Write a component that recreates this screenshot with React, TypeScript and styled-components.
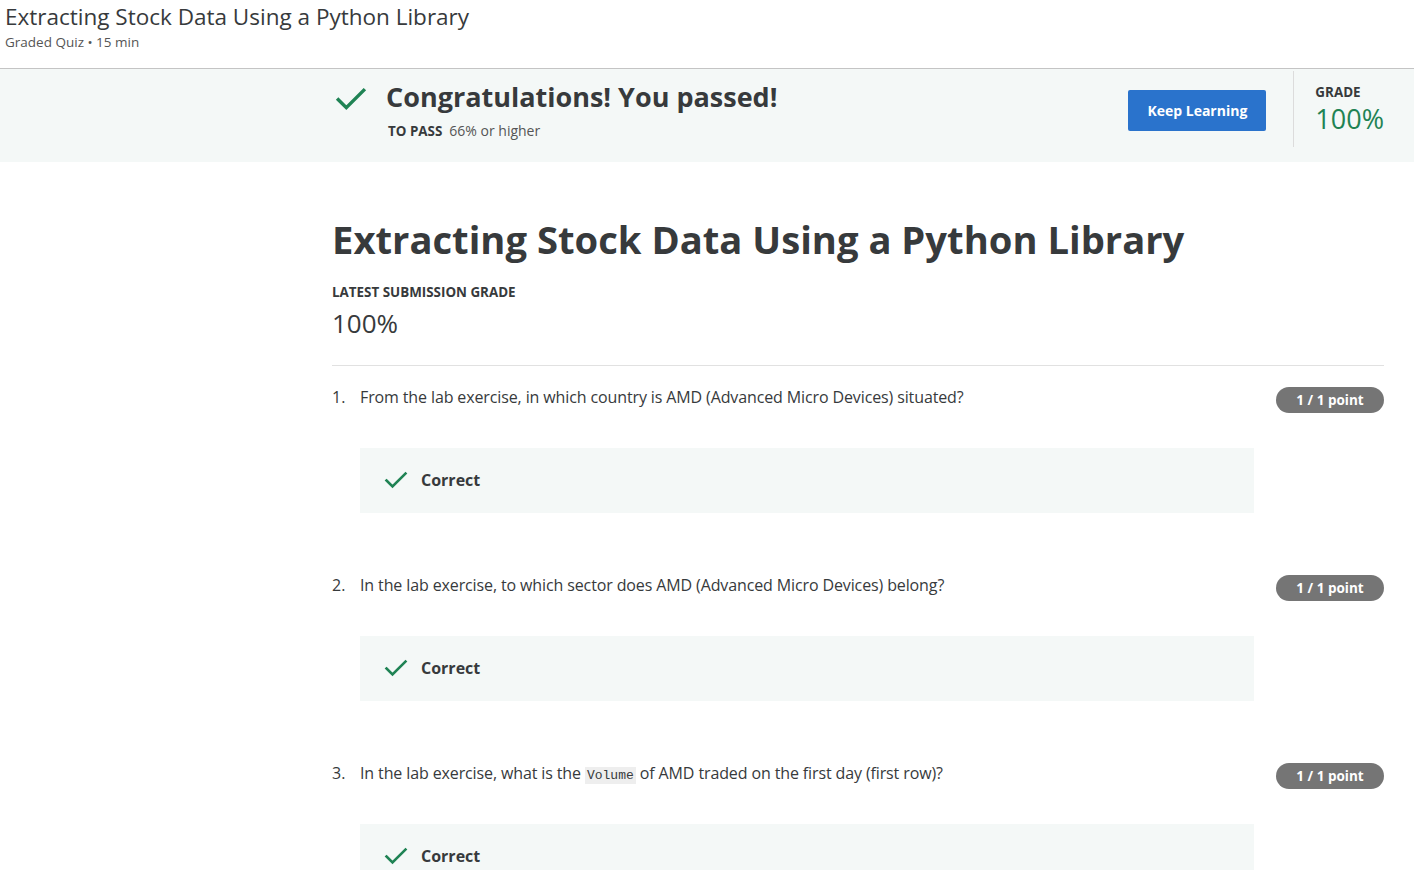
import React from "react";
import styled, { createGlobalStyle } from "styled-components";

const Global = createGlobalStyle`
  html, body { margin: 0; padding: 0; background: #fff; }
  body { font-family: "Open Sans", "Liberation Sans", sans-serif; color: #373a3c; }
  * { box-sizing: border-box; }
`;

const Page = styled.div`
  width: 1414px;
  height: 870px;
  overflow: hidden;
`;

const TopBar = styled.header`
  height: 69px;
  border-bottom: 1px solid #c4c4c4;
  padding: 2px 0 0 5px;
`;

const TopTitle = styled.h2`
  margin: 0;
  font-size: 22.5px;
  font-weight: 400;
  line-height: 29px;
  color: #373a3c;
`;

const TopMeta = styled.div`
  font-size: 13.5px;
  line-height: 20px;
  margin-top: 1px;
  color: #555;
`;

const Banner = styled.section`
  height: 93px;
  background: #f4f8f7;
  display: flex;
  align-items: flex-start;
  padding-left: 335px;
  padding-right: 30px;
`;

const BannerMain = styled.div`
  flex: 1;
  display: flex;
  gap: 19px;
  padding-top: 12px;
`;

const CheckSlot = styled.div`
  padding-top: 2px;
`;

const BannerText = styled.div`
  display: flex;
  flex-direction: column;
`;

const BannerHeading = styled.h1`
  margin: 0;
  font-size: 27px;
  font-weight: 700;
  line-height: 32px;
  color: #373a3c;
`;

const PassLine = styled.div`
  margin-top: 8px;
  padding-left: 2px;
  font-size: 14px;
  line-height: 20px;
  color: #555;
  display: flex;
  align-items: baseline;
  gap: 7px;
`;

const Label = styled.span`
  display: block;
  font-size: 13.4px;
  line-height: 18px;
  font-weight: 700;
  color: #373a3c;
  text-transform: uppercase;
`;

const PrimaryButton = styled.button`
  margin-top: 21px;
  height: 41px;
  width: 138px;
  border: none;
  border-radius: 2px;
  background: #2a73cc;
  color: #fff;
  font-family: inherit;
  font-size: 14px;
  font-weight: 700;
  cursor: pointer;
`;

const GradeBox = styled.div`
  margin-left: 27px;
  margin-top: 2px;
  height: 76px;
  border-left: 1px solid #dcdcdc;
  padding: 12px 0 0 21px;
  display: flex;
  flex-direction: column;
  gap: 1px;
`;

const GradeValue = styled.div<{ $color?: string; $size?: number }>`
  font-size: ${(p) => p.$size ?? 27}px;
  line-height: 1.25;
  color: ${(p) => p.$color ?? "#373a3c"};
  font-weight: 400;
`;

const Content = styled.main`
  width: 1052px;
  margin-left: 332px;
  padding-top: 51px;
`;

const PageTitle = styled.h1`
  margin: 0;
  font-size: 38.2px;
  font-weight: 700;
  line-height: 52px;
  color: #373a3c;
`;

const Summary = styled.div`
  margin-top: 18px;
  padding-bottom: 25px;
  border-bottom: 1px solid #e1e1e1;
  display: flex;
  flex-direction: column;
  gap: 6px;
`;

const Question = styled.div`
  padding-top: 19px;
  padding-bottom: 41px;
`;

const QuestionRow = styled.div`
  display: flex;
  align-items: flex-start;
`;

const QNum = styled.span`
  width: 28px;
  font-size: 16px;
  line-height: 24px;
  color: #373a3c;
`;

const QText = styled.div`
  flex: 1;
  font-size: 16px;
  letter-spacing: -0.12px;
  line-height: 24px;
  color: #373a3c;
`;

const Code = styled.code`
  font-family: "Liberation Mono", monospace;
  font-size: 13px;
  letter-spacing: 0;
  background: #eeeeee;
  padding: 1px 2px;
`;

const PointBadge = styled.span`
  margin-top: 2px;
  height: 26px;
  width: 108px;
  border-radius: 13px;
  background: #757575;
  color: #fff;
  font-size: 13.5px;
  font-weight: 700;
  display: flex;
  align-items: center;
  justify-content: center;
`;

const Feedback = styled.div`
  margin: 35px 130px 0 28px;
  height: 65px;
  background: #f4f8f7;
  display: flex;
  align-items: center;
  gap: 13px;
  padding-left: 24px;
`;

const FeedbackText = styled.span`
  font-size: 16px;
  font-weight: 700;
  color: #373a3c;
`;

const Check = ({ size }: { size: number }) => (
  <svg width={size} height={size} viewBox="0 0 24 24" fill="none">
    <path d="M2.5 12.5 L8.5 18.5 L21.5 5.5" stroke="#1f8354" strokeWidth="2.6" strokeLinecap="square" />
  </svg>
);

const questions: { text: React.ReactNode }[] = [
  { text: "From the lab exercise, in which country is AMD (Advanced Micro Devices) situated?" },
  { text: "In the lab exercise, to which sector does AMD (Advanced Micro Devices) belong?" },
  {
    text: (
      <>
        In the lab exercise, what is the <Code>Volume</Code> of AMD traded on the first day (first row)?
      </>
    ),
  },
];

export default function App() {
  return (
    <Page>
      <Global />
      <TopBar>
        <TopTitle>Extracting Stock Data Using a Python Library</TopTitle>
        <TopMeta>Graded Quiz • 15 min</TopMeta>
      </TopBar>
      <Banner>
        <BannerMain>
          <CheckSlot>
            <Check size={32} />
          </CheckSlot>
          <BannerText>
            <BannerHeading>Congratulations! You passed!</BannerHeading>
            <PassLine>
              <Label>To pass</Label>
              <span>66% or higher</span>
            </PassLine>
          </BannerText>
        </BannerMain>
        <PrimaryButton>Keep Learning</PrimaryButton>
        <GradeBox>
          <Label>Grade</Label>
          <GradeValue $color="#1f8354">100%</GradeValue>
        </GradeBox>
      </Banner>
      <Content>
        <PageTitle>Extracting Stock Data Using a Python Library</PageTitle>
        <Summary>
          <Label>Latest Submission Grade</Label>
          <GradeValue $size={26}>100%</GradeValue>
        </Summary>
        {questions.map((q, i) => (
          <Question key={i}>
            <QuestionRow>
              <QNum>{i + 1}.</QNum>
              <QText>{q.text}</QText>
              <PointBadge>1 / 1 point</PointBadge>
            </QuestionRow>
            <Feedback>
              <Check size={24} />
              <FeedbackText>Correct</FeedbackText>
            </Feedback>
          </Question>
        ))}
      </Content>
    </Page>
  );
}
